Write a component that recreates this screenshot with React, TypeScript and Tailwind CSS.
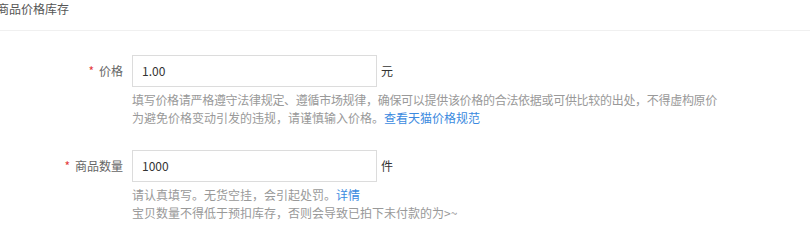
import React from "react";

const font = { fontFamily: '"Noto Sans CJK SC", "Noto Sans", sans-serif' };

function Row({
  label,
  value,
  unit,
  help,
}: {
  label: string;
  value: string;
  unit: string;
  help: React.ReactNode;
}) {
  return (
    <div className="flex">
      <div className="w-[123px] shrink-0 h-[32px] flex items-center justify-end text-[12px] text-[#666]">
        <span className="text-[#e4393c] mr-[5px] text-[12px]">*</span>
        <span>{label}</span>
      </div>
      <div className="ml-[9px] flex flex-col">
        <div className="flex items-center">
          <div className="w-[245px] h-[32px] border border-[#dcdcdc] flex items-center pl-[9px] text-[12px] text-[#333]">
            {value}
          </div>
          <span className="ml-[4px] text-[12px] text-[#333]">{unit}</span>
        </div>
        <div className="mt-[4px] text-[12px] leading-[18px] text-[#999] whitespace-nowrap">
          {help}
        </div>
      </div>
    </div>
  );
}

export default function App() {
  return (
    <div className="w-[810px] h-[235px] bg-white overflow-hidden" style={font}>
      <div className="h-[31px] border-b border-[#f0f0f0] pt-[1px]">
        <div className="-ml-[3px] text-[12px] leading-[16px] text-[#555]">商品价格库存</div>
      </div>
      <div className="pt-[24px] flex flex-col gap-[23px]">
        <Row
          label="价格"
          value="1.00"
          unit="元"
          help={
            <>
              <div className="tracking-[-0.3px]">填写价格请严格遵守法律规定、遵循市场规律，确保可以提供该价格的合法依据或可供比较的出处，不得虚构原价</div>
              <div>
                为避免价格变动引发的违规，请谨慎输入价格。
                <span className="text-[#3b8ae0]">查看天猫价格规范</span>
              </div>
            </>
          }
        />
        <Row
          label="商品数量"
          value="1000"
          unit="件"
          help={
            <>
              <div>
                请认真填写。无货空挂，会引起处罚。
                <span className="text-[#3b8ae0]">详情</span>
              </div>
              <div>宝贝数量不得低于预扣库存，否则会导致已拍下未付款的为&gt;~</div>
            </>
          }
        />
      </div>
    </div>
  );
}
